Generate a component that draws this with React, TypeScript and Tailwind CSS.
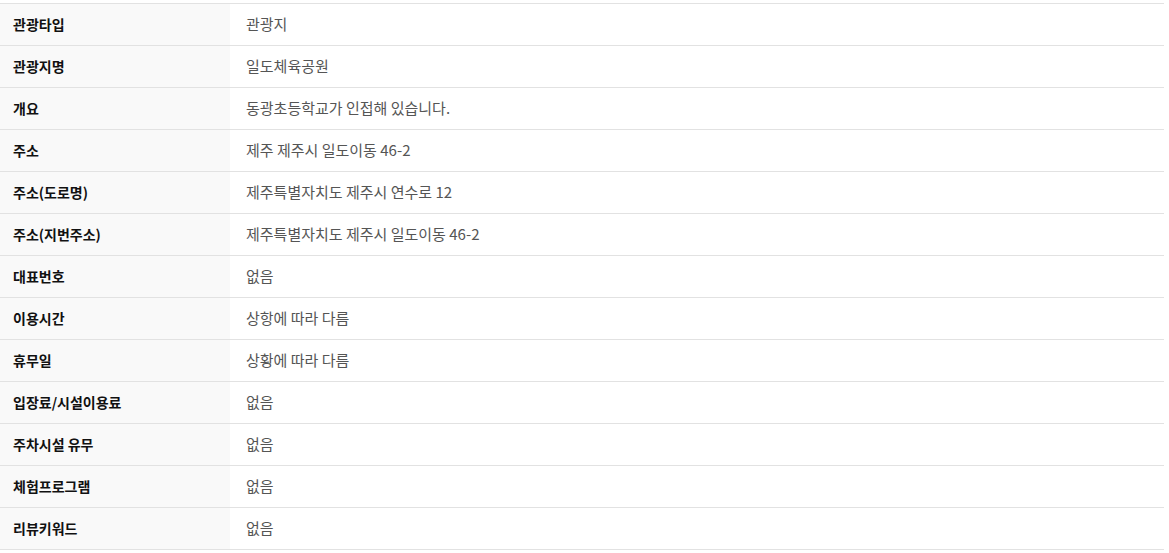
import React from "react";

const rows: [string, string][] = [
  ["관광타입", "관광지"],
  ["관광지명", "일도체육공원"],
  ["개요", "동광초등학교가 인접해 있습니다."],
  ["주소", "제주 제주시 일도이동 46-2"],
  ["주소(도로명)", "제주특별자치도 제주시 연수로 12"],
  ["주소(지번주소)", "제주특별자치도 제주시 일도이동 46-2"],
  ["대표번호", "없음"],
  ["이용시간", "상항에 따라 다름"],
  ["휴무일", "상황에 따라 다름"],
  ["입장료/시설이용료", "없음"],
  ["주차시설 유무", "없음"],
  ["체험프로그램", "없음"],
  ["리뷰키워드", "없음"],
];

export default function App() {
  return (
    <div
      className="w-[1169px] h-[553px] bg-white pt-[3px]"
      style={{ fontFamily: '"Noto Sans CJK KR", "Noto Sans", sans-serif' }}
    >
      <div className="w-[1164px] border-b border-[#e2e2e2]">
        {rows.map(([k, v]) => (
          <div key={k} className="flex h-[42px] border-t border-[#e2e2e2]">
            <div className="w-[230px] bg-[#f9f9f9] pl-[13px] pb-[1px] flex items-center text-[14px] font-bold text-[#111]">
              {k}
            </div>
            <div className="flex-1 pl-[16px] pb-[1px] flex items-center text-[15px] text-[#555]">
              {v}
            </div>
          </div>
        ))}
      </div>
    </div>
  );
}
